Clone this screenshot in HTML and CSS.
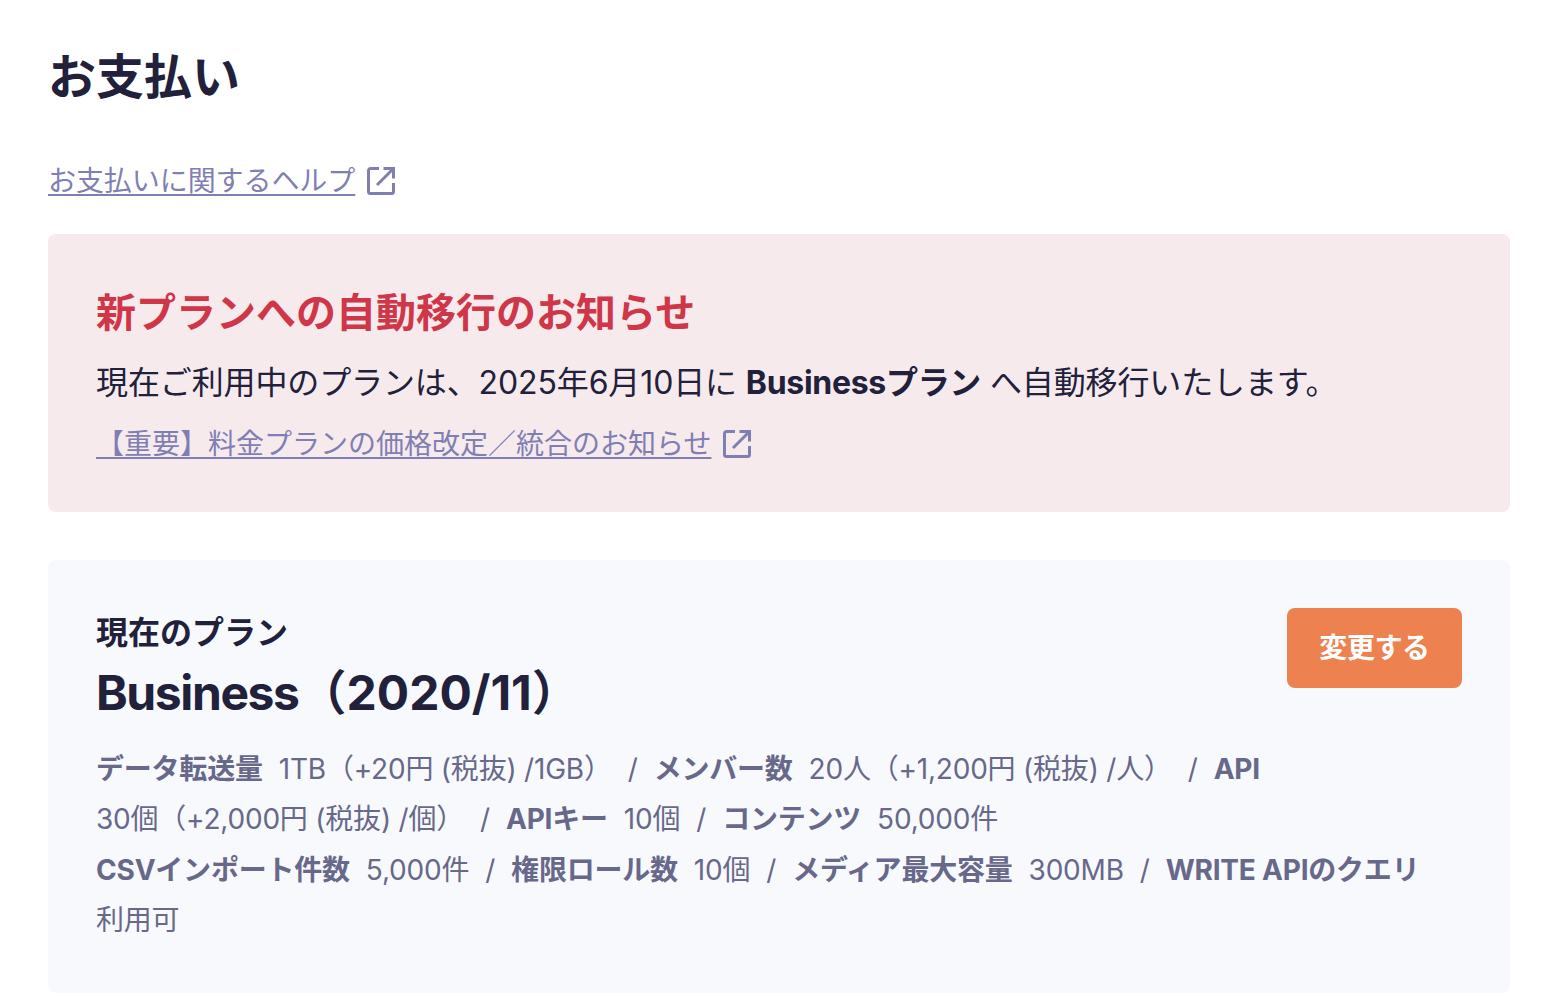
FILE: index.html

```html
<!doctype html>
<html lang="ja">
<head>
  <title>お支払い</title>
  <meta charset="utf-8">

  <link rel="stylesheet" href="styles.css">
</head>
<body>
  <h1 class="page-title">お支払い</h1>
  <p class="help">
    <a class="link" href="#">お支払いに関するヘルプ</a>
    <svg class="ext-icon" viewBox="0 0 30 30"><path d="M13 2.5H4.5a2 2 0 0 0-2 2v21a2 2 0 0 0 2 2h21a2 2 0 0 0 2-2V17M11 19 27.5 2.5M17.5 2.5h10v10"/></svg>
  </p>

  <div class="notice">
    <h2 class="notice-title">新プランへの自動移行のお知らせ</h2>
    <p class="notice-text">現在ご利用中のプランは、2025年6月10日に <b>Businessプラン</b> へ自動移行いたします。</p>
    <p class="notice-link">
      <a class="link" href="#">【重要】料金プランの価格改定／統合のお知らせ</a>
      <svg class="ext-icon" viewBox="0 0 30 30"><path d="M13 2.5H4.5a2 2 0 0 0-2 2v21a2 2 0 0 0 2 2h21a2 2 0 0 0 2-2V17M11 19 27.5 2.5M17.5 2.5h10v10"/></svg>
    </p>
  </div>

  <div class="plan">
    <div class="plan-head">
      <div>
        <div class="plan-label">現在のプラン</div>
        <div class="plan-name"><span class="plan-word">Business</span>（2020/11）</div>
      </div>
      <button class="change-btn">変更する</button>
    </div>
    <p class="plan-detail">
      <b>データ転送量</b>1TB（+20円 (税抜) /1GB）<i>/</i><b>メンバー数</b>20人（+1,200円 (税抜) /人）<i>/</i><b>API</b><br>
      30個（+2,000円 (税抜) /個）<i>/</i><b>APIキー</b>10個<i>/</i><b>コンテンツ</b>50,000件<br>
      <b>CSVインポート件数</b>5,000件<i>/</i><b>権限ロール数</b>10個<i>/</i><b>メディア最大容量</b>300MB<i>/</i><b>WRITE APIのクエリ</b><br>
      利用可
    </p>
  </div>
</body>
</html>
```

FILE: styles.css

```css
body {
  margin: 0;
  padding: 48px 40px 3px 48px;
  background: #fff;
  color: #21213b;
  font-family: Inter, "Noto Sans CJK JP", sans-serif;
}
p {
  margin: 0;
}
.page-title {
  margin: 0;
  padding-top: 1px;
  font-size: 48px;
  line-height: 56px;
  font-weight: 700;
}
.help {
  margin-top: 56px;
  height: 40px;
  font-size: 28px;
  line-height: 40px;
  letter-spacing: -0.07px;
  display: flex;
  align-items: center;
  gap: 12px;
}
.link {
  color: #7f7fb3;
  text-decoration: underline;
  text-decoration-thickness: 2px;
  text-underline-offset: 3px;
}
.ext-icon {
  width: 30px;
  height: 30px;
  margin-left: -1px;
  fill: none;
  stroke: #7f7fb3;
  stroke-width: 3;
}
.notice {
  margin-top: 33px;
  padding: 48px;
  height: 278px;
  box-sizing: border-box;
  background: #f6eaed;
  border-radius: 8px;
}
.notice-title {
  margin: 3px 0 0;
  font-size: 40px;
  line-height: 56px;
  font-weight: 700;
  color: #cf3648;
}
.notice-text {
  margin-top: 18px;
  font-size: 32px;
  line-height: 48px;
  letter-spacing: -0.12px;
}
.notice-text b {
  letter-spacing: -0.3px;
}
.notice-link {
  margin-top: 17px;
  font-size: 28px;
  line-height: 40px;
  display: flex;
  align-items: center;
  gap: 12px;
}
.plan {
  margin-top: 48px;
  padding: 48px;
  height: 433px;
  box-sizing: border-box;
  background: #f8f9fd;
  border-radius: 8px;
}
.plan-head {
  display: flex;
  justify-content: space-between;
  align-items: flex-start;
}
.plan-label {
  padding-top: 1px;
  font-size: 32px;
  line-height: 48px;
  font-weight: 700;
}
.plan-name {
  font-size: 48px;
  line-height: 72px;
  font-weight: 700;
}
.plan-word {
  letter-spacing: -1.4px;
}
.change-btn {
  width: 175px;
  height: 80px;
  padding: 0 0 4px;
  border: none;
  border-radius: 8px;
  background: #ed814f;
  color: #fff;
  font: 700 28px Inter, "Noto Sans CJK JP", sans-serif;
  letter-spacing: -0.4px;
}
.plan-detail {
  margin-top: 15px;
  font-size: 28px;
  line-height: 50.4px;
  letter-spacing: -0.21px;
  color: #67688a;
}
.plan-detail b {
  margin-right: 16px;
}
.plan-detail i {
  font-style: normal;
  margin: 0 16px;
}
```
